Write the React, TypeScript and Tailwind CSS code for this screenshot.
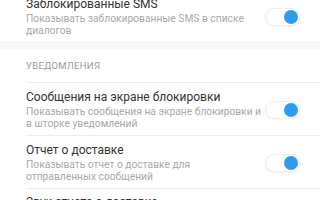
import React from 'react';

type Row = { title: string; lines: string[] };

const rows: Row[] = [
    { title: 'Сообщения на экране блокировки', lines: ['Показывать сообщения на экране блокировки и', 'в шторке уведомлений'] },
    { title: 'Отчет о доставке', lines: ['Показывать отчет о доставке для', 'отправленных сообщений'] },
];

function Toggle() {
    return (
        <div className="flex h-[18px] w-[35px] shrink-0 items-center justify-end rounded-full border border-[#ededed] bg-white px-[1px] shadow-[0_1px_2px_rgba(0,0,0,0.05)]">
            <div className="h-[14px] w-[14px] rounded-full bg-[#2e9bef]" />
        </div>
    );
}

function SettingRow({ title, lines }: Row) {
    return (
        <div className="flex items-center pr-[20px]">
            <div className="flex-1">
                <div className="text-[12px] leading-[16px] text-[#333333]">{title}</div>
                <div className="mt-[1px] text-[10.25px] leading-[12px] text-[#a8a8a8]">
                    {lines.map((l) => (
                        <div key={l}>{l}</div>
                    ))}
                </div>
            </div>
            <Toggle />
        </div>
    );
}

export default function App() {
    return (
        <div className="h-[200px] w-[320px] overflow-hidden bg-white font-['Roboto',sans-serif]">
            <div className="-mt-[4px] pl-[26px]">
                <SettingRow title="Заблокированные SMS" lines={['Показывать заблокированные SMS в списке', 'диалогов']} />
            </div>
            <div className="mt-[4px] h-[9px] bg-[#f6f6f6]" />
            <div className="pl-[26px]">
                <div className="pt-[10px] pb-[10px] text-[9.5px] leading-[12px] tracking-[0.3px] text-[#9a9a9a]">УВЕДОМЛЕНИЯ</div>
                {rows.map((r) => (
                    <div key={r.title} className="border-t border-[#ededed] pt-[6px] pb-[5px]">
                        <SettingRow {...r} />
                    </div>
                ))}
                <div className="border-t border-[#ededed] pt-[5px]">
                    <div className="text-[12px] leading-[16px] text-[#333333]">Звук отчета о доставке</div>
                </div>
            </div>
        </div>
    );
}
